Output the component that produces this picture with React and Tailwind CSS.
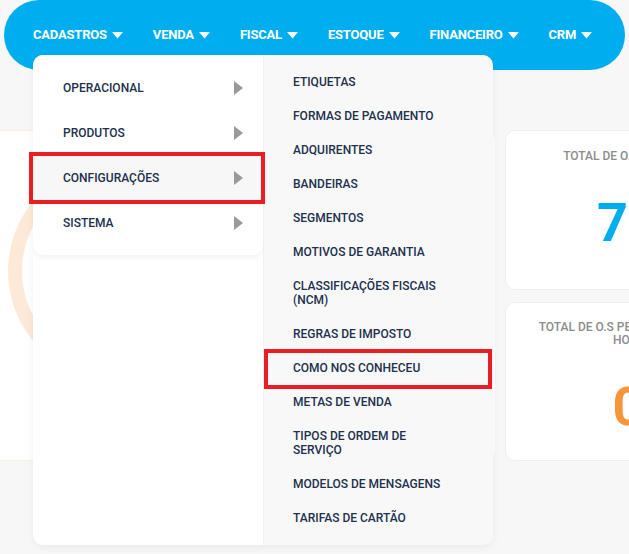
import React from 'react';

const navItems = ['CADASTROS', 'VENDA', 'FISCAL', 'ESTOQUE', 'FINANCEIRO', 'CRM'];
const groups = ['OPERACIONAL', 'PRODUTOS', 'CONFIGURAÇÕES', 'SISTEMA'];
const subItems = [
  'ETIQUETAS',
  'FORMAS DE PAGAMENTO',
  'ADQUIRENTES',
  'BANDEIRAS',
  'SEGMENTOS',
  'MOTIVOS DE GARANTIA',
  'CLASSIFICAÇÕES FISCAIS (NCM)',
  'REGRAS DE IMPOSTO',
  'COMO NOS CONHECEU',
  'METAS DE VENDA',
  'TIPOS DE ORDEM DE SERVIÇO',
  'MODELOS DE MENSAGENS',
  'TARIFAS DE CARTÃO',
];

const Caret = () => (
  <svg width="11" height="7" viewBox="0 0 11 7" className="ml-[5px]">
    <path d="M0 0 H11 L5.5 6.5 Z" fill="white" />
  </svg>
);

const App = () => {
  return (
    <div className="relative w-[629px] h-[554px] overflow-hidden bg-[#f7f7f7] font-['Roboto',sans-serif]">
      {/* top nav */}
      <nav className="mx-[4px] h-[70px] rounded-full bg-[#00aeef] flex items-center pl-[29px] gap-[30px]">
        {navItems.map((item) => (
          <div key={item} className="flex items-center text-white text-[13px] font-bold tracking-[-0.2px]">
            {item}
            <Caret />
          </div>
        ))}
      </nav>

      {/* dashboard behind */}
      <div className="flex gap-[10px] mt-[60px]">
        <div className="relative w-[495px] h-[331px] shrink-0 bg-white border-y border-[#fdeee3] rounded-r-[10px] overflow-hidden">
          <svg width="260" height="260" className="absolute left-[0px] top-[10px]">
            <circle cx="118" cy="130" r="103" fill="none" stroke="#fde9d8" strokeWidth="14" />
          </svg>
        </div>
        <div className="flex flex-col gap-[12px] shrink-0">
          <div className="w-[246px] h-[160px] bg-white border border-[#eeeeee] rounded-[10px] pt-[18px] text-center">
            <p className="text-[12px] leading-[14px] text-[#8c8c8c] font-medium">TOTAL DE O.S ABERTAS</p>
            <p className="mt-[33px] text-[54px] leading-none font-bold text-[#00aeef]">75</p>
          </div>
          <div className="w-[246px] h-[159px] bg-white border border-[#eeeeee] rounded-[10px] pt-[18px] px-[25px] text-center">
            <p className="text-[12px] leading-[13px] text-[#8c8c8c] font-medium">TOTAL DE O.S PENDENTES PARA HOJE</p>
            <p className="mt-[33px] text-[54px] leading-none font-bold text-[#f7953b]">0</p>
          </div>
        </div>
      </div>

      {/* dropdown */}
      <div className="absolute left-[33px] top-[55px] w-[460px] h-[490px] flex rounded-[10px] shadow-[0_2px_8px_rgba(0,0,0,0.06)] overflow-hidden">
        <div className="w-[230px] bg-white">
          <div className="bg-white rounded-b-[10px] py-[10px] shadow-[0_3px_6px_rgba(0,0,0,0.05)]">
            {groups.map((g) => (
              <div
                key={g}
                className={`h-[45px] flex items-center justify-between pl-[30px] pr-[20px] text-[12px] font-medium text-[#22304d] ${g === 'CONFIGURAÇÕES' ? 'bg-[#f7f7f7]' : ''}`}
              >
                {g}
                <svg width="9" height="14" viewBox="0 0 9 14">
                  <path d="M0 0 L9 7 L0 14 Z" fill="#999999" />
                </svg>
              </div>
            ))}
          </div>
        </div>
        <div className="w-[230px] bg-[#f8f8f8] py-[10px] border-l border-[#f0f0f0]">
          {subItems.map((s) => (
            <div key={s} className="py-[10px] pl-[29px] pr-[40px] text-[12px] leading-[14px] font-medium text-[#22304d]">
              {s}
            </div>
          ))}
        </div>
      </div>

      {/* highlight boxes */}
      <div className="absolute left-[29px] top-[152px] w-[236px] h-[52px] border-[4px] border-[#ec1c24]" />
      <div className="absolute left-[264px] top-[349px] w-[228px] h-[40px] border-[4px] border-[#ec1c24]" />
    </div>
  );
};

export default App;
